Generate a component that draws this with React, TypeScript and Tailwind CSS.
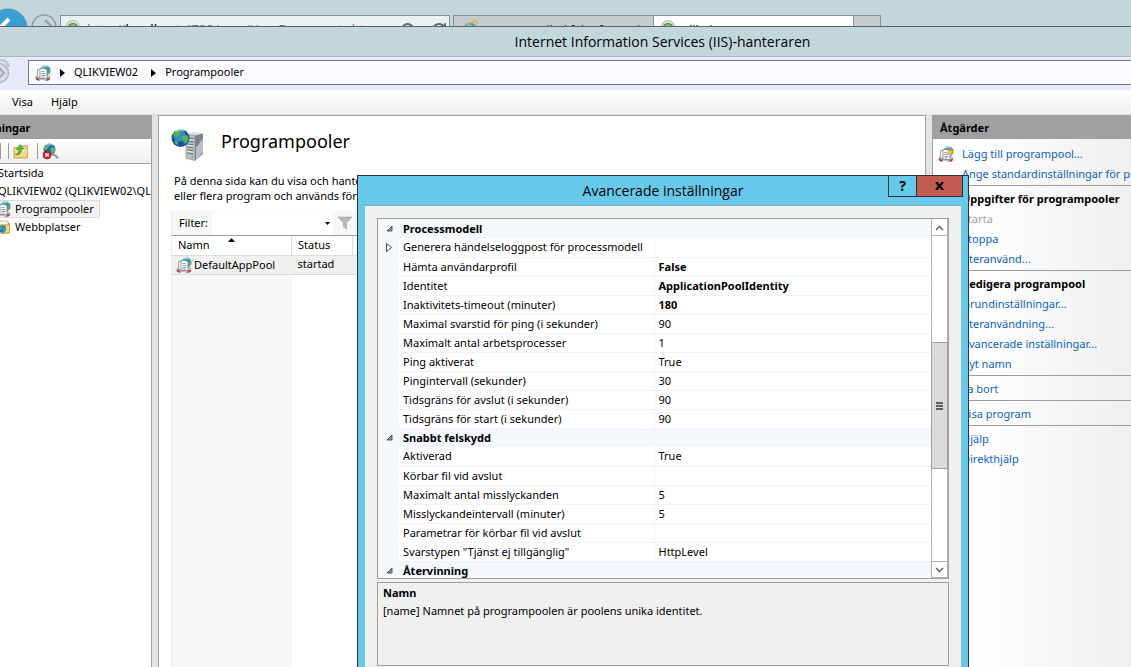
import React from 'react';
import { Search, RotateCw } from 'lucide-react';

type Row = {
  label: string;
  value?: string;
  bold?: boolean;
  group?: boolean;
  expandable?: boolean;
};

const ROWS: Row[] = [
  { label: 'Processmodell', group: true },
  { label: 'Generera händelseloggpost för processmodell', expandable: true },
  { label: 'Hämta användarprofil', value: 'False', bold: true },
  { label: 'Identitet', value: 'ApplicationPoolIdentity', bold: true },
  { label: 'Inaktivitets-timeout (minuter)', value: '180', bold: true },
  { label: 'Maximal svarstid för ping (i sekunder)', value: '90' },
  { label: 'Maximalt antal arbetsprocesser', value: '1' },
  { label: 'Ping aktiverat', value: 'True' },
  { label: 'Pingintervall (sekunder)', value: '30' },
  { label: 'Tidsgräns för avslut (i sekunder)', value: '90' },
  { label: 'Tidsgräns för start (i sekunder)', value: '90' },
  { label: 'Snabbt felskydd', group: true },
  { label: 'Aktiverad', value: 'True' },
  { label: 'Körbar fil vid avslut' },
  { label: 'Maximalt antal misslyckanden', value: '5' },
  { label: 'Misslyckandeintervall (minuter)', value: '5' },
  { label: 'Parametrar för körbar fil vid avslut' },
  { label: 'Svarstypen "Tjänst ej tillgänglig"', value: 'HttpLevel' },
  { label: 'Återvinning', group: true },
];

// Application pool: papers in front of a globe, red base
const PoolIcon = ({ star = false }: { star?: boolean }) => (
  <svg width="16" height="16" viewBox="0 0 16 16" className="shrink-0">
    <circle cx="10.5" cy="5.5" r="5" fill="#2f8fe0" />
    <path d="M8 1.600c2-.9 3 .4 2.400 1.500S8 4 7.500 5 6 5 6 4.500 6.800 2.200 8 1.600zM12 4c1.500 0 2.800.5 3 2s-1 3.500-2 3-1.800-2-1.800-3S11 4 12 4z" fill="#4cb648" />
    <path d="M7.500 2.500C8.500 1.300 11 1 12.500 2" stroke="#b7e3fb" fill="none" />
    <path d="M1 11.500l2-1h10l2 1.500-1.500 3.300-3.500.5-1.500-1.500h-3L4 15.700.8 14z" fill="#c9c9c9" stroke="#8c8c8c" strokeWidth=".6" />
    <path d="M1 12.500l3.500 1.300-.8 1.900L1 14.600zM15 12.500l-3.800 1.500.8 1.700 2.500-.9z" fill="#d3342a" />
    <path d="M2.500 4.500h5v8h-5z" fill="#f5f5f5" stroke="#8b939b" strokeWidth=".8" />
    <path d="M5 3.500h5l2 2v8H5z" fill="#fff" stroke="#71808e" strokeWidth=".8" />
    <path d="M6.500 6.500h3M6.500 8.500h4M6.500 10.500h4M6.500 12h3" stroke="#5a88b6" strokeWidth=".8" />
    {star && <path d="M12.500 2l.9 2.400 2.400-.5-1.500 2 1.500 2-2.400-.4-.9 2.400-.9-2.400-2.400.4 1.500-2-1.500-2 2.400.5z" fill="#ffb52b" stroke="#f08c13" strokeWidth=".4" />}
  </svg>
);

const SitesIcon = () => (
  <svg width="16" height="16" viewBox="0 0 16 16" className="shrink-0">
    <path d="M1 3h5l1 1.500h7.500V14H1z" fill="#e9b64d" stroke="#b98b2c" strokeWidth=".8" />
    <path d="M4 2h9v4H4z" fill="#fff8dc" stroke="#c3a052" strokeWidth=".6" />
    <path d="M1 6h13.500v8H1z" fill="#f7d687" stroke="#c3963a" strokeWidth=".8" />
    <circle cx="7.500" cy="10" r="3.700" fill="#2a7bd0" />
    <path d="M5 8.500c1-1.500 2.500-1 2.500 0S5.500 10 5 11zM9 9c1 0 2 .5 1.500 2S9 13 8.500 12s-.5-3 .5-3z" fill="#53bd48" />
  </svg>
);

const FolderUpIcon = () => (
  <svg width="16" height="16" viewBox="0 0 16 16">
    <path d="M1 4.500h6l1-1.500h6.500V15H1z" fill="#f3d588" stroke="#c59a43" strokeWidth=".9" />
    <path d="M1.500 7.500h13" stroke="#fff0c0" />
    <path d="M2.500 11.500c2.500-.3 3.500-2 3.500-5H3.500L7 1.500l3.800 4.200H8.500c0 4.300-2 6.800-6 5.800z" fill="#55c13b" stroke="#3a9128" strokeWidth=".7" />
  </svg>
);

const DisconnectIcon = () => (
  <svg width="17" height="17" viewBox="0 0 17 17">
    <circle cx="7.500" cy="6.500" r="6" fill="#2665b5" />
    <path d="M4 2c2-1.500 4-1 4 .3S6 4 5 6 2 6 2 5s.7-2.200 2-3zM9 5c1.500-1 4-.8 4 1.500S11 11 10 10.500 7.800 6 9 5z" fill="#5cbb67" />
    <path d="M4 2c2-1.500 5-1.500 7 .5" stroke="#a6dcf7" fill="none" />
    <path d="M9.500 11.500l4 1 2.500 3" stroke="#98a2ad" strokeWidth="2.200" fill="none" />
    <circle cx="5" cy="12" r="4" fill="#cf2424" stroke="#901515" strokeWidth=".6" />
    <path d="M3.400 10.400l3.200 3.200m0-3.200l-3.200 3.200" stroke="#fff" strokeWidth="1.400" />
  </svg>
);

const ServerIcon = () => (
  <svg width="34" height="34" viewBox="0 0 34 34" className="shrink-0">
    <path d="M15 6.500L23 4l9 1.500-7 2z" fill="#dadde0" />
    <path d="M15 6.500l9 1v25l-9-2z" fill="#b8bec4" stroke="#7f868c" strokeWidth=".6" />
    <path d="M24 7.500l8-2v20.500l-8 6.500z" fill="#7d8389" />
    <path d="M25 20l7-10v14l-7 8z" fill="#b9bec3" />
    <path d="M16.500 10l6 .8M16.500 13l6 .8M16.500 16l6 .8M16.500 19l6 .8M16.500 22l6 .8M16.500 25l6 .8" stroke="#6c7379" strokeWidth="1.200" />
    <path d="M16.500 11.400l6 .8M16.500 17.400l6 .8M16.500 23.400l6 .8" stroke="#f3f5f6" />
    <circle cx="21.500" cy="29" r="1.300" fill="#6fd24a" />
    <circle cx="9.500" cy="10" r="9" fill="#1452ab" />
    <circle cx="8.500" cy="7.500" r="6" fill="#4b9fe3" opacity=".7" />
    <path d="M4 3.500c3-2.500 7-2.500 7-.8S8.500 5 8 7.500 5 9 3.500 8.500 1.500 6 4 3.500zM12 8c2-1.500 5-1 5.500 1.500s-2 6-3.500 6-1.500-2.500-2.500-4-1-2.500.5-3.500zM4 12.500c2 0 3 1.200 3 2.500s-.5 2-1.500 1.500S3 12.500 4 12.500z" fill="#54b848" />
    <path d="M5 3c3-2 6-2 8.500-.5" stroke="#c8ecfd" strokeWidth="1.200" fill="none" />
  </svg>
);

const QlikIcon = () => (
  <svg width="16" height="16" viewBox="0 0 16 16" className="shrink-0">
    <circle cx="8" cy="8" r="7.300" fill="#e4e4e4" stroke="#b5b5b5" />
    <circle cx="8" cy="8" r="4.500" fill="#8fc27e" stroke="#4c9a3c" strokeWidth="1.500" />
    <circle cx="8" cy="8" r="2" fill="#3d5a38" />
  </svg>
);

const IeIcon = () => (
  <svg width="16" height="16" viewBox="0 0 16 16" className="shrink-0">
    <path d="M13 9.500H5M12.800 10.500A5 5 0 1 1 13 8" fill="none" stroke="#2da3e0" strokeWidth="2.400" />
    <path d="M2 14C-1 11 8 1 13.500 1.200c2 .2 1.500 2.500.5 4" fill="none" stroke="#f2b51d" strokeWidth="1.400" />
  </svg>
);

const BrowserStrip = () => (
  <div className="flex h-[26px] shrink-0 items-start overflow-hidden">
    <button aria-label="Bakåt" className="-ml-3 mt-2 h-10 w-10 shrink-0">
      <svg width="40" height="40" viewBox="0 0 40 40">
        <circle cx="20" cy="20" r="19" fill="#359fd6" stroke="#6f8d99" />
        <path d="M21 11l-9 9 9 9M13 20h18" stroke="#fff" strokeWidth="4" fill="none" />
      </svg>
    </button>
    <button aria-label="Framåt" className="ml-[3px] mt-3.5 h-[26px] w-[26px] shrink-0">
      <svg width="26" height="26" viewBox="0 0 26 26">
        <circle cx="13" cy="13" r="12" fill="none" stroke="#8f9ba0" strokeWidth="1.500" />
        <path d="M14 6l7 7-7 7M20 13H5" stroke="#8f9ba0" strokeWidth="2" fill="none" />
      </svg>
    </button>
    <div className="ml-[3px] mt-[15px] flex h-6 w-[390px] items-start border border-[#7f9499] bg-[#e9f1f3] pl-1 pt-1">
      <QlikIcon />
      <span className="ml-1.5 flex-1 text-[13px] leading-[18px] text-[#777]">
        http://<span className="text-black">localhost</span>:4780/qmc/UserDocuments.htm
      </span>
      <Search className="mt-0.5 h-4 w-4 -scale-x-100 text-[#666]" strokeWidth={3} />
      <RotateCw className="ml-4 mr-0.5 mt-0.5 h-4 w-4 text-[#666]" strokeWidth={3} />
    </div>
    <div className="ml-[3px] mt-[15px] flex h-6 w-[201px] items-start border border-[#7f9499] bg-[#c5cccd] pl-2 pt-1">
      <IeIcon />
      <span className="ml-1 whitespace-nowrap pt-0.5 text-[12px] leading-[18px] text-[#222]">IIS 8.0 Detailed fel Information</span>
    </div>
    <div className="mt-[15px] flex h-6 w-[200px] items-start border-r border-t border-[#7f9499] bg-white pl-1.5 pt-1">
      <QlikIcon />
      <span className="ml-1 flex-1 whitespace-nowrap pt-0.5 text-[12px] leading-[18px] text-black">QlikView Management C...</span>
      <span className="mr-1.5 text-[14px] leading-[18px] text-[#888]">×</span>
    </div>
    <div className="mt-[15px] h-6 w-[27px] border-r border-t border-[#7f9499] bg-[#c5cccd]" />
  </div>
);

const Crumb = ({ children }: { children: React.ReactNode }) => (
  <>
    <svg width="5" height="8" viewBox="0 0 5 8">
      <path d="M0 0l5 4-5 4z" fill="#000" />
    </svg>
    <a href="#" className="ml-[9px] mr-[13px]">{children}</a>
  </>
);

const Connections = () => (
  <aside className="flex w-[152px] shrink-0 flex-col overflow-hidden border-r border-[#a0a0a0] bg-white">
    <h2 className="-ml-[43px] h-6 bg-[#a0a0a0] pl-0.5 pt-px text-[11px] font-bold leading-6">Anslutningar</h2>
    <div className="flex h-[25px] items-center border-b border-[#a0a0a0] bg-gradient-to-b from-white to-[#f0f0f0]">
      <span className="h-4 w-px bg-[#999]" />
      <span className="ml-[7px] h-4 w-px bg-[#999]" />
      <button aria-label="Upp" className="ml-1"><FolderUpIcon /></button>
      <span className="ml-2 h-4 w-px bg-[#999]" />
      <button aria-label="Koppla från" className="ml-1"><DisconnectIcon /></button>
    </div>
    <ul className="whitespace-nowrap leading-[18px]">
      <li className="-ml-0.5">Startsida</li>
      <li className="-ml-0.5">QLIKVIEW02 (QLIKVIEW02\QLIK)</li>
      <li className="-ml-1.5 flex w-[106px] items-center gap-1 border border-[#dadada] bg-[#f3f3f3] leading-4">
        <PoolIcon />Programpooler
      </li>
      <li className="-ml-1.5 flex items-center gap-1 pl-px"><SitesIcon />Webbplatser</li>
    </ul>
  </aside>
);

const PoolList = () => (
  <main className="min-w-0 flex-1 border border-b-0 border-[#a0a0a0] bg-white pl-3">
    <div className="flex h-[57px] items-center">
      <ServerIcon />
      <h1 className="ml-4 pb-1.5 text-[18px]">Programpooler</h1>
    </div>
    <p className="w-[380px] pl-[3px] leading-[15px]">
      På denna sida kan du visa och hantera listan över
      <br />
      eller flera program och används för att isolera
    </p>
    <div className="mt-2 flex h-[25px] items-center border-b border-l border-[#a0a0a0] border-l-[#e8e8e8] bg-[#f7f7f7]">
      <label htmlFor="filter" className="w-10 shrink-0 pl-[7px]">Filter:</label>
      <input id="filter" className="h-[23px] w-[113px] bg-white px-1 outline-none" />
      <button aria-label="Visa filter" className="flex h-[23px] w-2 items-center bg-white">
        <svg width="5" height="3" viewBox="0 0 5 3"><path d="M0 0h5L2.500 3z" fill="#000" /></svg>
      </button>
      <svg width="14" height="14" viewBox="0 0 14 14" className="ml-[5px]">
        <path d="M0 1h14L8.500 7v6l-3-2V7z" fill="#b8b8b8" stroke="#999" strokeWidth=".5" />
      </svg>
    </div>
    <table className="h-[470px] w-full table-fixed border-l border-[#eee]">
      <thead>
        <tr className="h-[19px] border-b border-[#dcdcdc] text-left">
          <th className="relative w-[120px] border-r border-[#dcdcdc] p-0 pl-1.5 font-normal">
            Namn
            <svg width="7" height="4" viewBox="0 0 7 4" className="absolute left-14 top-0.5">
              <path d="M3.500 0L7 4H0z" fill="#000" />
            </svg>
          </th>
          <th className="w-[61px] border-r border-[#dcdcdc] p-0 pl-1.5 font-normal">Status</th>
          <th />
        </tr>
      </thead>
      <tbody>
        <tr className="h-[19px] border-b border-[#dcdcdc] bg-[#f0f0f0]">
          <td className="p-0 pl-1">
            <span className="flex items-center gap-0.5 leading-4"><PoolIcon />DefaultAppPool</span>
          </td>
          <td className="p-0 pl-1.5">startad</td>
          <td />
        </tr>
        <tr>
          <td className="bg-[#f7f7f7]" />
          <td />
          <td />
        </tr>
      </tbody>
    </table>
  </main>
);

const ACTIONS = [
  {
    title: 'Uppgifter för programpooler',
    items: ['Starta', 'Stoppa', 'Återanvänd...'],
  },
  {
    title: 'Redigera programpool',
    items: ['Grundinställningar...', 'Återanvändning...', 'Avancerade inställningar...', 'Byt namn'],
  },
  { items: ['Ta bort'] },
  { items: ['Visa program'] },
  { items: ['Hjälp', 'Direkthjälp'] },
];

const Actions = () => (
  <aside className="w-[199px] shrink-0 overflow-hidden whitespace-nowrap border-l border-[#a0a0a0] bg-gradient-to-r from-white from-20% to-[#f0f0f0]">
    <h2 className="h-6 bg-[#a0a0a0] pl-[7px] pt-px text-[11px] font-bold leading-6">Åtgärder</h2>
    <div className="pt-[5px] leading-5 text-[#0a62c8]">
      <div className="flex items-center gap-2 pl-[5px]">
        <PoolIcon star />
        <a href="#">Lägg till programpool...</a>
      </div>
      <a href="#" className="block pl-[29px]">Ange standardinställningar för programpool...</a>
      {ACTIONS.map((section, i) => (
        <section key={i}>
          <div className="ml-6 mb-[3px] mt-px h-px bg-[#9c9c9c]" />
          {section.title && <h3 className="pl-[29px] font-bold text-black">{section.title}</h3>}
          {section.items.map(item =>
            item === 'Starta' ? (
              <span key={item} className="block pl-[29px] text-[#a0a0a0]">{item}</span>
            ) : (
              <a key={item} href="#" className="block pl-[29px]">{item}</a>
            )
          )}
        </section>
      ))}
    </div>
  </aside>
);

const PropertyGrid = () => (
  <div className="flex h-[361px] border border-[#a0a0a0] bg-white">
    <div className="min-w-0 flex-1 overflow-hidden">
      <table className="w-full table-fixed">
        <colgroup>
          <col className="w-[21px]" />
          <col className="w-[255px]" />
          <col />
        </colgroup>
        <tbody>
          {ROWS.map(row =>
            row.group ? (
              <tr key={row.label} className="h-[19px] bg-[#f4f7fc]">
                <td className="p-0 pl-2">
                  <svg width="7" height="7" viewBox="0 0 7 7">
                    <path d="M6 1v5H1z" fill="#999" stroke="#333" strokeWidth=".8" />
                  </svg>
                </td>
                <th colSpan={2} className="p-0 pl-1 text-left font-bold leading-[18px]">{row.label}</th>
              </tr>
            ) : (
              <tr key={row.label} className="h-[19px]">
                <td className="bg-[#f4f7fc] p-0 pl-2">
                  {row.expandable && (
                    <svg width="6" height="9" viewBox="0 0 6 9">
                      <path d="M.5.5l5 4-5 4z" fill="#fff" stroke="#333" strokeWidth=".9" />
                    </svg>
                  )}
                </td>
                <td className="whitespace-nowrap border-b border-r border-[#f0f3f9] p-0 pl-1 leading-[18px]">{row.label}</td>
                <td className={`border-b border-[#f0f3f9] p-0 pl-1 leading-[18px] ${row.bold ? 'font-bold' : ''}`}>{row.value}</td>
              </tr>
            )
          )}
        </tbody>
      </table>
    </div>
    <div className="flex w-[17px] flex-col border-x border-[#b4b4b4]">
      <button aria-label="Rulla upp" className="flex h-[17px] items-center justify-center border-b border-[#b4b4b4] pt-0.5">
        <svg width="9" height="6" viewBox="0 0 9 6"><path d="M1 5l3.500-3.500L8 5" fill="none" stroke="#606060" strokeWidth="1.500" /></svg>
      </button>
      <div className="flex-1" />
      <div className="-mx-px mb-[92px] flex h-[127px] flex-col items-center justify-center gap-px border border-[#a0a0a0] bg-[#dadada]">
        <span className="h-0.5 w-[7px] bg-[#606060]" />
        <span className="h-0.5 w-[7px] bg-[#606060]" />
        <span className="h-0.5 w-[7px] bg-[#606060]" />
      </div>
      <button aria-label="Rulla ned" className="flex h-[17px] items-center justify-center border-y border-[#b4b4b4]">
        <svg width="9" height="6" viewBox="0 0 9 6"><path d="M1 1l3.500 3.500L8 1" fill="none" stroke="#606060" strokeWidth="1.500" /></svg>
      </button>
    </div>
  </div>
);

const SettingsDialog = () => (
  <div role="dialog" aria-label="Avancerade inställningar" className="absolute -bottom-5 left-[357px] top-[175px] flex w-[612px] flex-col border border-[#2b3338] bg-[#66c9ea] px-[7px] pb-2">
    <div className="grid h-[29px] grid-cols-[1fr_auto_1fr] items-start">
      <span />
      <h2 className="font-['Open_Sans',sans-serif] text-[14px] leading-[29px]">Avancerade inställningar</h2>
      <div className="-mr-0.5 flex justify-end">
        <button aria-label="Hjälp" className="h-[21px] w-7 border border-r-0 border-t-0 border-[#2b3338] text-[14px] font-bold leading-5">?</button>
        <button aria-label="Stäng" className="flex h-[21px] w-[47px] items-center justify-center border border-t-0 border-[#2b3338] bg-[#c35a50]">
          <svg width="9" height="8" viewBox="0 0 9 8"><path d="M1 0l7 8M8 0L1 8" stroke="#000" strokeWidth="2.200" /></svg>
        </button>
      </div>
    </div>
    <div className="flex-1 border-t border-[#7fa9b8] bg-[#f0f0f0] px-3 pt-3">
      <PropertyGrid />
      <div className="mt-[3px] h-[84px] border border-[#a0a0a0] px-[5px] pt-px leading-[18px]">
        <h3 className="font-bold">Namn</h3>
        <p>[name] Namnet på programpoolen är poolens unika identitet.</p>
      </div>
    </div>
  </div>
);

export default function App() {
  return (
    <div className="relative flex h-screen flex-col overflow-hidden bg-[#c3d6dc] font-['Noto_Sans','Open_Sans',sans-serif] text-[11px] text-black">
      <BrowserStrip />
      <div className="flex min-h-0 flex-1 flex-col border-t border-[#5c6468]">
        <div className="h-[30px] shrink-0 border-b border-[#a9b5c3] pl-[194px] text-center font-['Open_Sans',sans-serif] text-[14px] leading-[29px]">
          Internet Information Services (IIS)-hanteraren
        </div>
        <div className="flex h-[33px] shrink-0 items-center bg-[#e6ebfb]">
          <svg width="28" height="33" viewBox="0 0 28 33" className="shrink-0">
            <path d="M0 3q7 0 9 7" stroke="#c3c8d5" strokeWidth="3" fill="none" />
            <circle cx="-1" cy="16" r="9.500" fill="#d9dde8" stroke="#aeb4c2" strokeWidth="1.500" />
            <path d="M-1 11l5 5-5 5" stroke="#a4aab8" strokeWidth="2" fill="none" />
          </svg>
          <nav className="-mr-px mb-0.5 flex h-[25px] flex-1 items-center border border-[#74767e] bg-[#fafbff] pl-1.5">
            <PoolIcon />
            <span className="w-[9px]" />
            <Crumb>QLIKVIEW02</Crumb>
            <Crumb>Programpooler</Crumb>
          </nav>
        </div>
        <div className="flex h-6 shrink-0 items-center gap-[18px] bg-gradient-to-b from-white to-[#f0f0f0] pl-3">
          <button>Visa</button>
          <button>Hjälp</button>
        </div>
        <div className="flex min-h-0 flex-1 gap-1.5 border-t border-[#e3e3e3] bg-[#e3e3e3]">
          <Connections />
          <PoolList />
          <Actions />
        </div>
      </div>
      <SettingsDialog />
    </div>
  );
}
